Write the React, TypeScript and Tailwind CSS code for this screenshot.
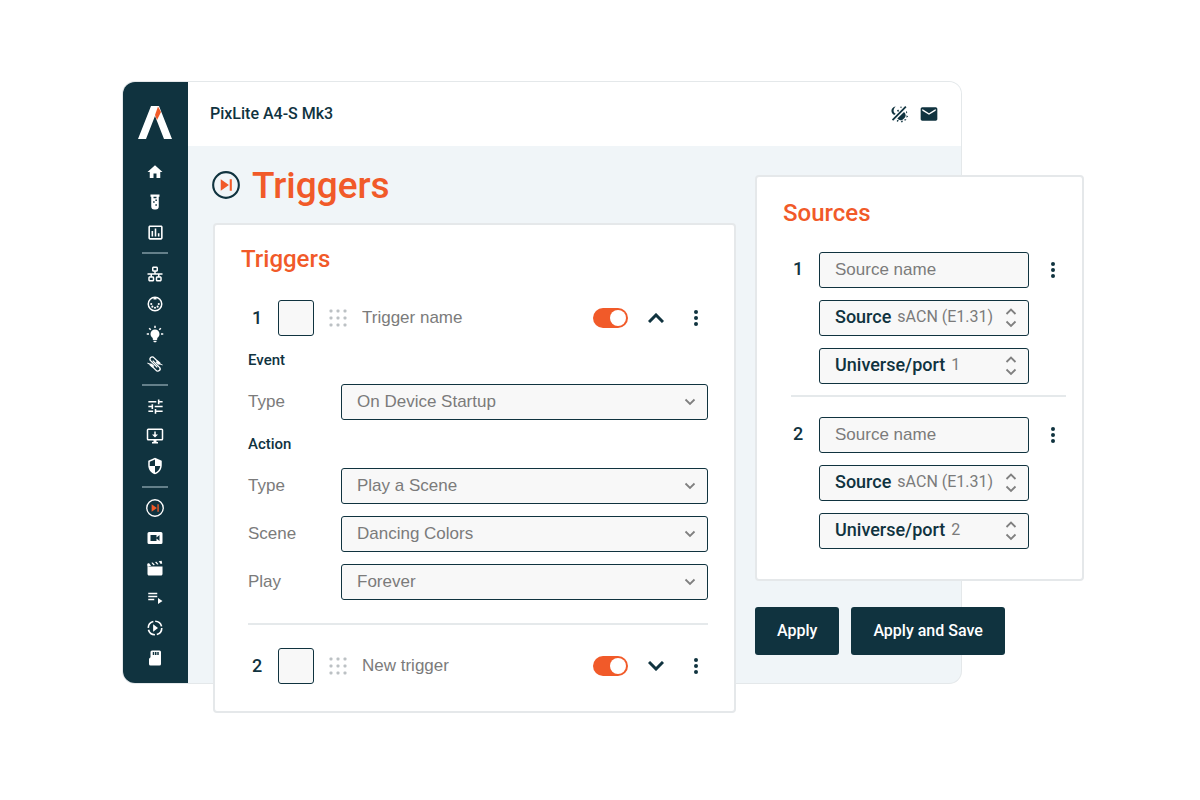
import { useState } from "react";
import type { ReactNode } from "react";
import { MdEmail, MdHome, MdOutlineInsertChart, MdSecurity, MdTune } from "react-icons/md";

const Glyph = ({ children, size = 18 }: { children: ReactNode; size?: number }) => (
  <svg width={size} height={size} viewBox="0 0 24 24" fill="currentColor" aria-hidden="true">
    {children}
  </svg>
);

const Logo = () => (
  <svg width="34" height="33" viewBox="0 0 34 33" aria-hidden="true">
    <path d="M13 0H21L34 33H26L17 10L8 33H0Z" fill="#fff" />
    <path d="M20 0.500L23 6L19 14L17 9Z" fill="#f15a29" />
  </svg>
);

const TubeIcon = () => (
  <Glyph>
    <path
      fillRule="evenodd"
      d="M6 2H18V5H17V18A4 4 0 0 1 13 22H11A4 4 0 0 1 7 18V5H6ZM10 5V7H14V5ZM9.500 11V13H11.500V11ZM12.500 8.500V10.500H14.500V8.500ZM12.500 15V17H14.500V15Z"
    />
  </Glyph>
);

const LanIcon = () => (
  <Glyph>
    <path d="M10,2C8.890,2 8,2.890 8,4V7C8,8.110 8.890,9 10,9H11V11H2V13H6V15H5C3.890,15 3,15.890 3,17V20C3,21.110 3.890,22 5,22H9C10.110,22 11,21.110 11,20V17C11,15.890 10.110,15 9,15H8V13H16V15H15C13.890,15 13,15.890 13,17V20C13,21.110 13.890,22 15,22H19C20.110,22 21,21.110 21,20V17C21,15.890 20.110,15 19,15H18V13H22V11H13V9H14C15.110,9 16,8.110 16,7V4C16,2.890 15.110,2 14,2H10M10,4H14V7H10V4M5,17H9V20H5V17M15,17H19V20H15V17Z" />
  </Glyph>
);

const MidiIcon = () => (
  <Glyph>
    <circle cx="12" cy="12" r="9" fill="none" stroke="currentColor" strokeWidth="2" />
    <circle cx="7" cy="12" r="1.400" />
    <circle cx="8.500" cy="15.500" r="1.400" />
    <circle cx="12" cy="17" r="1.400" />
    <circle cx="15.500" cy="15.500" r="1.400" />
    <circle cx="17" cy="12" r="1.400" />
    <path d="M10 3H14V6H10Z" />
  </Glyph>
);

const BulbIcon = () => (
  <Glyph>
    <path d="M12,6A6,6 0 0,1 18,12C18,14.220 16.790,16.160 15,17.200V19A1,1 0 0,1 14,20H10A1,1 0 0,1 9,19V17.200C7.210,16.160 6,14.220 6,12A6,6 0 0,1 12,6M14,21V22A1,1 0 0,1 13,23H11A1,1 0 0,1 10,22V21H14M20,11H23V13H20V11M1,11H4V13H1V11M13,1V4H11V1H13M4.920,3.500L7.050,5.640L5.630,7.050L3.500,4.930L4.920,3.500M16.950,5.630L19.070,3.500L20.500,4.930L18.370,7.050L16.950,5.630Z" />
  </Glyph>
);

const CableIcon = () => (
  <Glyph>
    <path
      d="M7 14L13.500 20.500A3 3 0 0 0 18 16.500L9 7.500M17 10L10.500 3.500A3 3 0 0 0 6 7.500L15 16.500"
      fill="none"
      stroke="currentColor"
      strokeWidth="1.800"
    />
    <path d="M2 10L4 11L8 11.500L11 14.500L8.500 17L5 14L4.500 12.500L2 11.500Z" />
    <path d="M22 14L20 13L16 12.500L13 9.500L15.500 7L19 10L19.500 11.500L22 12.500Z" />
  </Glyph>
);

const MonitorIcon = () => (
  <Glyph>
    <path fillRule="evenodd" d="M3 2H21A2 2 0 0 1 23 4V16A2 2 0 0 1 21 18H14V20H16V22H8V20H10V18H3A2 2 0 0 1 1 16V4A2 2 0 0 1 3 2ZM3 4V16H21V4Z" />
    <path d="M11 6H13V10H16L12 14L8 10H11Z" />
  </Glyph>
);

const TriggerIcon = ({ size = 18 }: { size?: number }) => (
  <Glyph size={size}>
    <circle cx="12" cy="12" r="11" fill="none" stroke="currentColor" strokeWidth="1.800" />
    <path d="M7.500 7L14.500 12L7.500 17ZM15.200 7H17V17H15.200Z" fill="#f15a29" />
  </Glyph>
);

const VideoIcon = () => (
  <Glyph>
    <path d="M18,16L14,12.800V16H6V8H14V11.200L18,8M20,4H4A2,2 0 0,0 2,6V18A2,2 0 0,0 4,20H20A2,2 0 0,0 22,18V6A2,2 0 0,0 20,4Z" />
  </Glyph>
);

const ClapperIcon = () => (
  <Glyph>
    <path d="M20.840 2.180L16.910 2.960L19.650 6.500L21.620 6.100L20.840 2.180M13.970 3.540L12 3.930L14.750 7.460L16.710 7.070L13.970 3.540M9.070 4.500L7.100 4.910L9.850 8.440L11.810 8.050L9.070 4.500M4.160 5.500L3.180 5.690A2 2 0 0 0 1.610 8.040L2 10L6.900 9.030L4.160 5.500M2 10V20C2 21.110 2.900 22 4 22H20C21.110 22 22 21.110 22 20V10H2Z" />
  </Glyph>
);

const PlaylistIcon = () => (
  <Glyph>
    <path d="M3 5H15V7H3ZM3 9H15V11H3ZM3 13H11V15H3ZM16 12V20L22 16Z" />
  </Glyph>
);

const MotionIcon = () => (
  <Glyph>
    <circle cx="12" cy="12" r="9" fill="none" stroke="currentColor" strokeWidth="2.200" strokeDasharray="11.600 2.537" />
    <path d="M9.500 7L16 12L9.500 17Z" />
  </Glyph>
);

const SdIcon = () => (
  <Glyph>
    <path
      fillRule="evenodd"
      d="M8 2H18A2 2 0 0 1 20 4V20A2 2 0 0 1 18 22H6A2 2 0 0 1 4 20V13L6 11V4A2 2 0 0 1 8 2ZM9 4V8H11V4ZM12 4V8H14V4ZM15 4V8H17V4Z"
    />
  </Glyph>
);

const ThemeIcon = () => (
  <Glyph size={20}>
    <path d="M8 3C4 3.500 2 7 3.500 10.500C4 12 5.500 13 7 13L8 11.500C5 10.500 4.500 6.500 8 3Z" />
    <path d="M19.500 2.500L21 4L5 20L3.500 18.500Z" />
    <path d="M9.500 8L11 6.500L12 8L11 9.500ZM13 3.500L15 3V5Z" />
    <path d="M18 9.500A5 5 0 0 1 18 17.500A5 5 0 0 1 10 17.500Z" />
    <path d="M20.500 8.500L22 10L20.500 11.500ZM21 13.500L23 15L21 16.500ZM18.500 18L21 18.500L19 20.500ZM14 20L17 20L15.500 22.500ZM9.500 19L12 20L9.500 21.500Z" />
  </Glyph>
);

const navGroups = [
  [
    { label: "Home", icon: <MdHome size={18} /> },
    { label: "Test", icon: <TubeIcon /> },
    { label: "Statistics", icon: <MdOutlineInsertChart size={19} /> },
  ],
  [
    { label: "Network", icon: <LanIcon /> },
    { label: "Control", icon: <MidiIcon /> },
    { label: "Pixels", icon: <BulbIcon /> },
    { label: "Ports", icon: <CableIcon /> },
  ],
  [
    { label: "Settings", icon: <MdTune size={19} /> },
    { label: "Firmware", icon: <MonitorIcon /> },
    { label: "Security", icon: <MdSecurity size={18} /> },
  ],
  [
    { label: "Triggers", icon: <TriggerIcon /> },
    { label: "Record", icon: <VideoIcon /> },
    { label: "Scenes", icon: <ClapperIcon /> },
    { label: "Playlists", icon: <PlaylistIcon /> },
    { label: "Playback", icon: <MotionIcon /> },
    { label: "Storage", icon: <SdIcon /> },
  ],
];

const Sidebar = () => (
  <nav aria-label="Main" className="flex w-[65px] shrink-0 flex-col items-center rounded-l-xl bg-[#10333f] pr-px pt-6 text-white">
    <Logo />
    <div className="mt-[23px] flex flex-col items-center gap-[10px]">
      {navGroups.map((group, i) => (
        <div key={i} className="flex flex-col items-center gap-[10px]">
          {i > 0 && <hr className="h-[2px] w-[26px] border-0 bg-[#64808a]" />}
          {group.map((item) => (
            <a key={item.label} href="#" aria-label={item.label} className="flex h-5 w-5 items-center justify-center">
              {item.icon}
            </a>
          ))}
        </div>
      ))}
    </div>
  </nav>
);

const Header = () => (
  <header className="flex h-16 items-center justify-between rounded-tr-xl bg-white pl-[22px] pr-[22px]">
    <span className="font-[Roboto,sans-serif] text-[16px] font-medium">PixLite A4-S Mk3</span>
    <div className="flex items-center gap-[10px]">
      <button type="button" aria-label="Toggle theme"><ThemeIcon /></button>
      <button type="button" aria-label="Messages"><MdEmail size={20} /></button>
    </div>
  </header>
);

const Chevron = ({ up = false, small = false }: { up?: boolean; small?: boolean }) => (
  <svg
    width={small ? 12 : 16}
    height={small ? 8 : 10}
    viewBox={small ? "0 0 12 8" : "0 0 16 10"}
    fill="none"
    stroke="currentColor"
    strokeWidth={small ? 1.8 : 3}
    className="shrink-0"
    aria-hidden="true"
  >
    {small ? <path d={up ? "M1.500 6L6 1.500L10.500 6" : "M1.500 1.500L6 6L10.500 1.500"} /> : <path d={up ? "M1 9L8 2L15 9" : "M1 1L8 8L15 1"} />}
  </svg>
);

const MoreButton = ({ label }: { label: string }) => (
  <button type="button" aria-label={label} className="shrink-0">
    <svg width="4" height="16" viewBox="0 0 4 16" fill="currentColor" aria-hidden="true">
      <circle cx="2" cy="2" r="2" />
      <circle cx="2" cy="8" r="2" />
      <circle cx="2" cy="14" r="2" />
    </svg>
  </button>
);

const DragHandle = () => (
  <svg width="18" height="18" viewBox="0 0 18 18" fill="#bcc1c4" className="shrink-0" aria-hidden="true">
    {[2, 9, 16].map((y) => [2, 9, 16].map((x) => <rect key={`${x}-${y}`} x={x - 1.5} y={y - 1.5} width="3" height="3" rx="1" />))}
  </svg>
);

const SelectRow = ({ id, label, options }: { id: string; label: string; options: string[] }) => (
  <div className="flex items-center">
    <label htmlFor={id} className="w-[93px] shrink-0 text-[17px] text-[#7b7b7b]">{label}</label>
    <div className="grid flex-1 items-center">
      <select
        id={id}
        className="col-start-1 row-start-1 h-9 w-full appearance-none rounded-[3px] border border-[#10333f] bg-[#f8f8f8] px-[15px] text-[17px] text-[#7b7b7b]"
      >
        {options.map((o) => <option key={o}>{o}</option>)}
      </select>
      <span className="pointer-events-none col-start-1 row-start-1 mr-3 justify-self-end text-[#808080]">
        <Chevron small />
      </span>
    </div>
  </div>
);

const TriggerRow = ({ n, name, open, onToggle }: { n: number; name: string; open: boolean; onToggle: () => void }) => (
  <div className="-ml-px flex items-center pr-[10px]">
    <span className="w-5 pb-[2px] text-center font-[Roboto,sans-serif] text-[18px] font-medium">{n}</span>
    <input
      type="text"
      aria-label={`Trigger ${n} number`}
      className="ml-[11px] h-9 w-9 shrink-0 rounded-[3px] border border-[#10333f] bg-[#f8f8f8] text-center"
    />
    <span className="ml-[15px]"><DragHandle /></span>
    <input
      type="text"
      aria-label={`Trigger ${n} name`}
      placeholder={name}
      className="ml-[15px] min-w-0 flex-1 bg-transparent text-[17px] placeholder:text-[#7b7b7b]"
    />
    <input
      type="checkbox"
      role="switch"
      defaultChecked
      aria-label={`Enable trigger ${n}`}
      className="flex h-5 w-[35px] shrink-0 appearance-none items-center rounded-full bg-[#b5bcc0] px-[2px] before:h-4 before:w-4 before:rounded-full before:bg-white checked:justify-end checked:bg-[#f15a29]"
    />
    <button type="button" aria-label={open ? "Collapse" : "Expand"} onClick={onToggle} className="ml-5 mr-[30px] shrink-0">
      <Chevron up={open} />
    </button>
    <MoreButton label={`Trigger ${n} menu`} />
  </div>
);

const TriggersCard = () => {
  const [open, setOpen] = useState(true);
  const [secondOpen, setSecondOpen] = useState(false);

  return (
    <section className="rounded-[4px] border-2 border-[#e5e8ea] bg-white px-[26px] pb-[27px] pt-[18px]">
      <h2 className="font-[Roboto,sans-serif] text-[24px] font-medium leading-8 text-[#f15a29]">Triggers</h2>
      <div className="mt-[25px] flex flex-col gap-3 pl-[7px]">
        <TriggerRow n={1} name="Trigger name" open={open} onToggle={() => setOpen(!open)} />
        {open && (
          <>
            <h3 className="font-[Roboto,sans-serif] text-[15px] font-medium leading-6">Event</h3>
            <SelectRow id="event-type" label="Type" options={["On Device Startup"]} />
            <h3 className="font-[Roboto,sans-serif] text-[15px] font-medium leading-6">Action</h3>
            <SelectRow id="action-type" label="Type" options={["Play a Scene"]} />
            <SelectRow id="action-scene" label="Scene" options={["Dancing Colors"]} />
            <SelectRow id="action-play" label="Play" options={["Forever"]} />
          </>
        )}
        <hr className="my-[11px] h-[2px] border-0 bg-[#e5e9eb]" />
        <TriggerRow n={2} name="New trigger" open={secondOpen} onToggle={() => setSecondOpen(!secondOpen)} />
      </div>
    </section>
  );
};

const InlineSelect = ({ label, options, value }: { label: string; options: string[]; value: string }) => (
  <label className="flex h-9 items-center rounded-[3px] border border-[#10333f] bg-[#f8f8f8] pl-[15px] pr-[11px] font-[Roboto,sans-serif]">
    <span className="pb-[3px] text-[18px] font-medium">{label}</span>
    <select defaultValue={value} className="ml-[6px] min-w-0 flex-1 appearance-none bg-transparent pb-[2px] text-[16px] text-[#7b7b7b]">
      {options.map((o) => <option key={o}>{o}</option>)}
    </select>
    <span className="flex flex-col gap-1 text-[#808080]">
      <Chevron small up />
      <Chevron small />
    </span>
  </label>
);

const SourceGroup = ({ n }: { n: number }) => (
  <div className="flex">
    <span className="w-[14px] text-center font-[Roboto,sans-serif] text-[18px] font-medium leading-[34px]">{n}</span>
    <div className="ml-[14px] flex min-w-0 flex-1 flex-col gap-3">
      <input
        type="text"
        aria-label={`Source ${n} name`}
        placeholder="Source name"
        className="h-9 w-full rounded-[3px] border border-[#10333f] bg-[#f8f8f8] px-[15px] text-[17px] placeholder:text-[#7b7b7b]"
      />
      <InlineSelect label="Source" options={["sACN (E1.31)", "Art-Net"]} value="sACN (E1.31)" />
      <InlineSelect label="Universe/port" options={["1", "2", "3", "4"]} value={String(n)} />
    </div>
    <div className="ml-[22px] mr-[11px] flex h-9 items-center">
      <MoreButton label={`Source ${n} menu`} />
    </div>
  </div>
);

const SourcesCard = () => (
  <section className="rounded-[4px] border-2 border-[#e5e8ea] bg-white pb-[30px] pl-[26px] pr-4 pt-5">
    <h2 className="font-[Roboto,sans-serif] text-[24px] font-medium leading-8 text-[#f15a29]">Sources</h2>
    <div className="mt-[23px] pl-2">
      <SourceGroup n={1} />
      <hr className="mb-5 mt-[11px] h-[2px] border-0 bg-[#e5e9eb]" />
      <SourceGroup n={2} />
    </div>
  </section>
);

const App = () => {
  return (
    <div className="grid min-h-screen items-start bg-white pl-[123px] pr-[116px] pt-[82px] font-['Liberation_Sans',Arial,sans-serif] text-[#10333f]">
      <div className="grid">
        {/* Window frame */}
        <div className="col-start-1 row-start-1 mb-[30px] mr-[123px] flex rounded-xl bg-[#f0f5f8] ring-1 ring-[#e4e8ea]">
          <Sidebar />
          <div className="flex-1">
            <Header />
          </div>
        </div>

        {/* Page content, wider and taller than the frame */}
        <main className="col-start-1 row-start-1 ml-[89px] mt-[65px] flex items-start gap-[19px]">
          <div className="min-w-0 flex-1">
            <div className="flex h-[76px] items-center gap-3">
              <TriggerIcon size={28} />
              <h1 className="font-[Roboto,sans-serif] text-[37px] font-medium leading-none text-[#f15a29]">Triggers</h1>
            </div>
            <div className="pl-px">
              <TriggersCard />
            </div>
          </div>
          <div className="w-[329px] shrink-0 pt-7">
            <SourcesCard />
            <div className="mt-[26px] flex gap-3 font-[Roboto,sans-serif] text-[16px] font-medium text-white">
              <button type="button" className="h-12 rounded-[3px] bg-[#10333f] px-[22px]">Apply</button>
              <button type="button" className="h-12 rounded-[3px] bg-[#10333f] px-[22px]">Apply and Save</button>
            </div>
          </div>
        </main>
      </div>
    </div>
  );
};

export default App;
